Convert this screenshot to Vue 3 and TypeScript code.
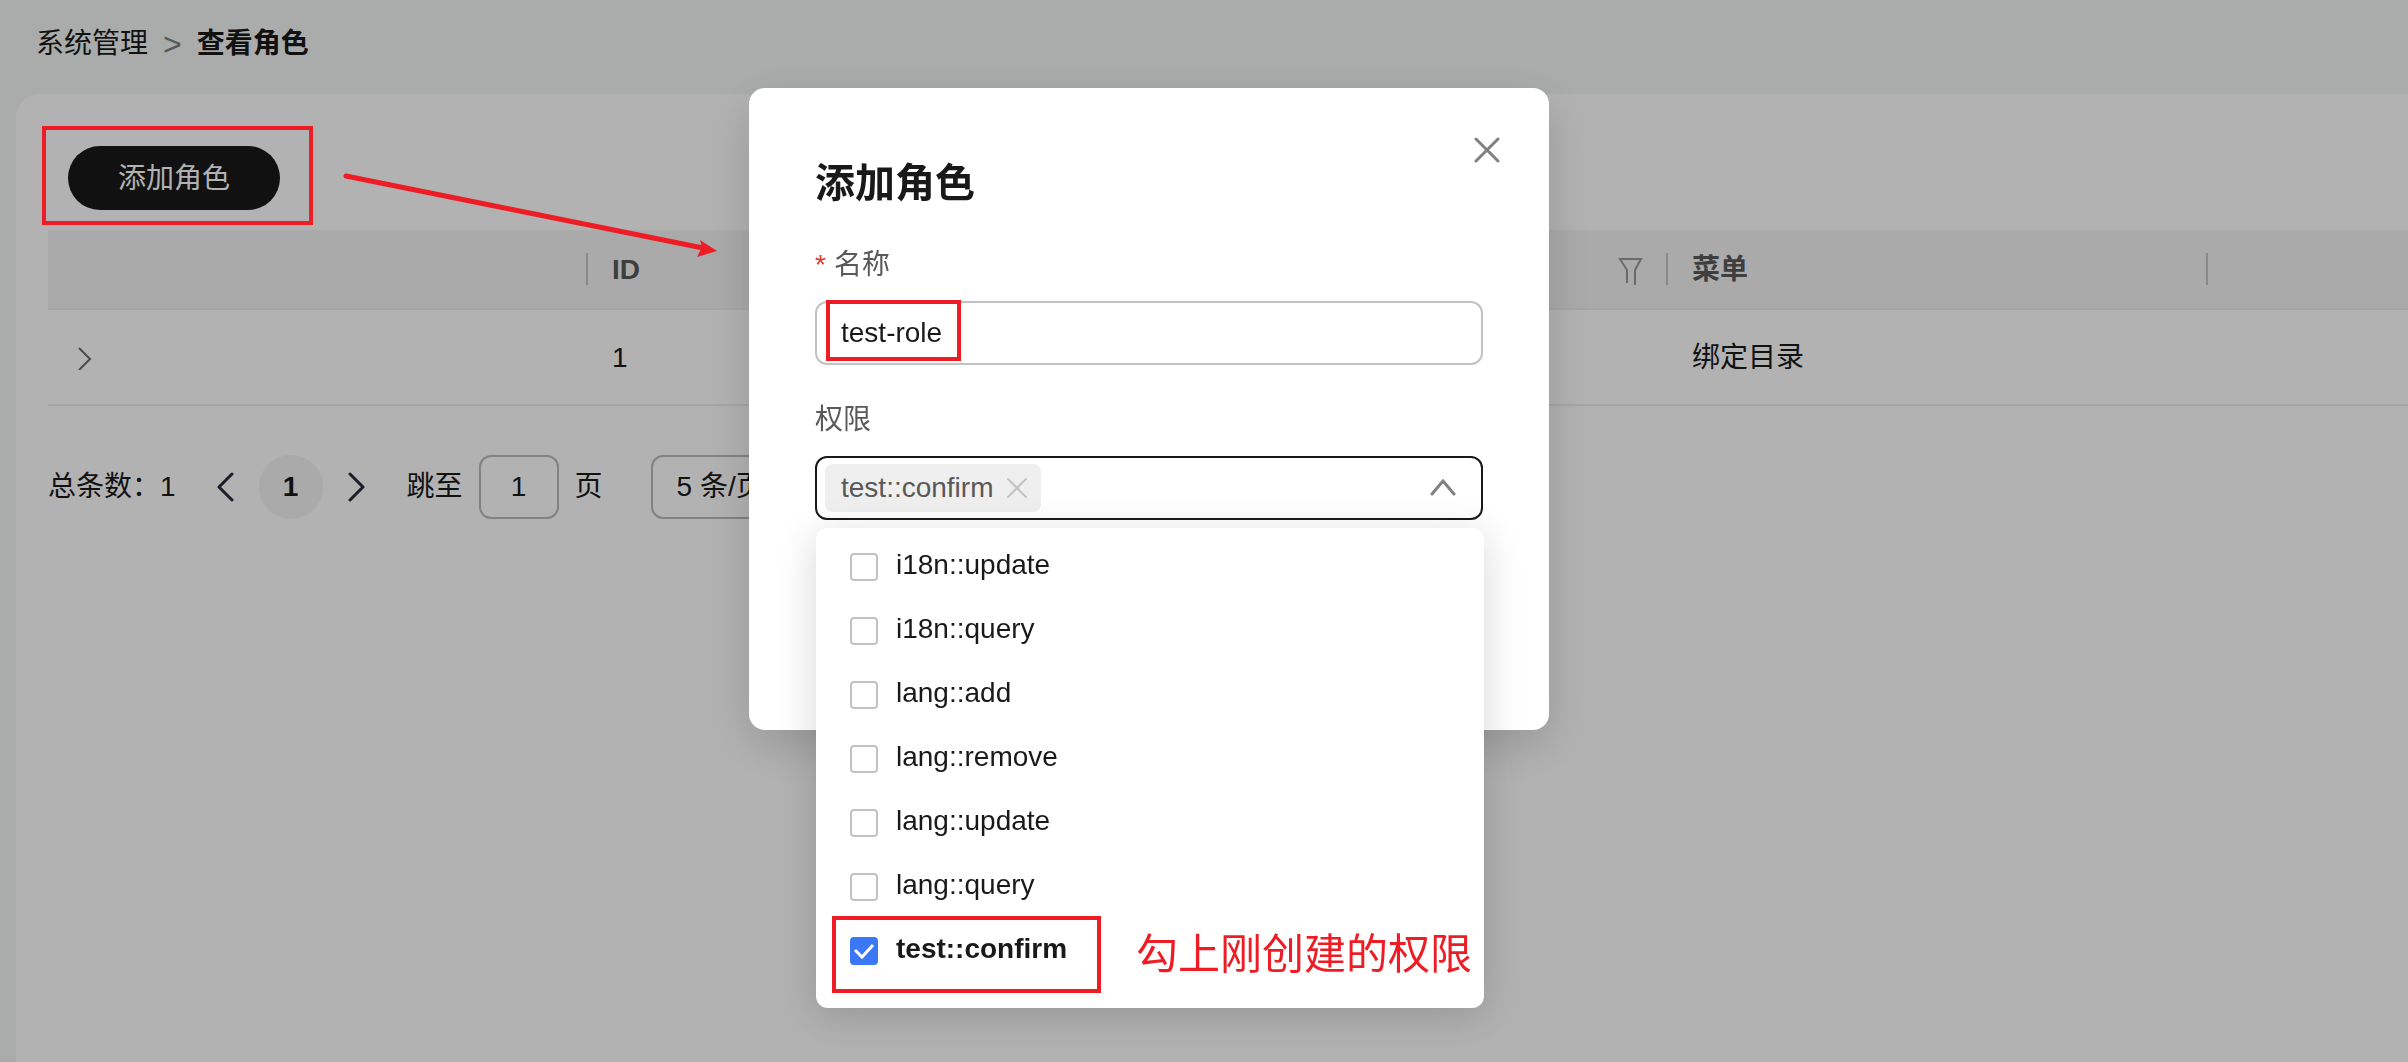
<script setup lang="ts">
import { computed, ref } from 'vue'

interface Permission {
  name: string
  checked: boolean
}

const roleName = ref('test-role')
const page = ref('1')
const pageSize = ref('5')

const permissions = ref<Permission[]>([
  { name: 'i18n::update', checked: false },
  { name: 'i18n::query', checked: false },
  { name: 'lang::add', checked: false },
  { name: 'lang::remove', checked: false },
  { name: 'lang::update', checked: false },
  { name: 'lang::query', checked: false },
  { name: 'test::confirm', checked: true },
])

const selected = computed(() => permissions.value.filter((p) => p.checked))
</script>

<template>
  <div class="page">
    <nav class="breadcrumb" aria-label="breadcrumb">
      <a href="#">系统管理</a>
      <span class="sep">&gt;</span>
      <strong>查看角色</strong>
    </nav>

    <main class="panel">
      <div class="toolbar">
        <div class="marked">
          <button class="primary" type="button">添加角色</button>
          <span class="mark mark-button"></span>
          <svg class="arrow" width="376" height="90" viewBox="0 0 376 90" aria-hidden="true">
            <path d="M4 6 L361 78" stroke="#ee1c24" stroke-width="5" stroke-linecap="round" />
            <path d="M375 81 L358 70 L360 77 L355 87 Z" fill="#ee1c24" />
          </svg>
        </div>
      </div>

      <div class="table-wrap">
        <table>
          <colgroup>
            <col class="col" /><col class="col" /><col class="col" /><col class="col" /><col />
          </colgroup>
          <thead>
            <tr>
              <th></th>
              <th>ID</th>
              <th>
                <div class="th-inner">
                  <span>名称</span>
                  <svg class="filter" width="26" height="30" viewBox="0 0 26 30" fill="none" stroke="#999" stroke-width="2">
                    <path d="M9 28 V15 L2 4 H23 L17 15 V30" />
                  </svg>
                </div>
              </th>
              <th>菜单</th>
              <th></th>
            </tr>
          </thead>
          <tbody>
            <tr>
              <td>
                <button class="plain expand" type="button" aria-label="展开">
                  <svg width="16" height="24" viewBox="0 0 16 24" fill="none" stroke="#6b6b6b" stroke-width="2">
                    <path d="M2 2 L13 13 L2 24" />
                  </svg>
                </button>
              </td>
              <td>1</td>
              <td>admin</td>
              <td>绑定目录</td>
              <td></td>
            </tr>
          </tbody>
        </table>
      </div>

      <div class="pager">
        <span class="total">总条数：1</span>
        <button class="plain prev" type="button" aria-label="上一页">
          <svg width="18" height="30" viewBox="0 0 18 30" fill="none" stroke="#252b3a" stroke-width="3" stroke-linecap="round" stroke-linejoin="round">
            <path d="M16 2 L3 15 L16 28" />
          </svg>
        </button>
        <button class="current" type="button">1</button>
        <button class="plain next" type="button" aria-label="下一页">
          <svg width="18" height="30" viewBox="0 0 18 30" fill="none" stroke="#252b3a" stroke-width="3" stroke-linecap="round" stroke-linejoin="round">
            <path d="M2 2 L15 15 L2 28" />
          </svg>
        </button>
        <label for="jump">跳至</label>
        <input id="jump" v-model="page" class="jump" type="text" />
        <span>页</span>
        <select v-model="pageSize" class="size" aria-label="每页条数">
          <option value="5">5 条/页</option>
          <option value="10">10 条/页</option>
        </select>
      </div>
    </main>

    <div class="overlay">
      <section class="modal" role="dialog" aria-labelledby="dialog-title">
        <button class="plain close" type="button" aria-label="关闭">
          <svg width="26" height="26" viewBox="0 0 26 26" stroke="#808080" stroke-width="3" stroke-linecap="round">
            <path d="M2 2 L24 24 M24 2 L2 24" />
          </svg>
        </button>
        <h2 id="dialog-title">添加角色</h2>

        <label class="field-label" for="role-name"><span class="star">*</span>名称</label>
        <div class="marked-field">
          <input id="role-name" v-model="roleName" class="text-input" type="text" />
          <span class="mark mark-name"></span>
        </div>

        <label class="field-label" for="role-perm">权限</label>
        <div class="select">
          <div class="select-box">
            <span v-for="p in selected" :key="p.name" class="tag">
              {{ p.name }}
              <button class="plain" type="button" aria-label="移除" @click="p.checked = false">
                <svg width="22" height="22" viewBox="0 0 22 22" stroke="#c2c2c2" stroke-width="2" stroke-linecap="round">
                  <path d="M2 2 L20 20 M20 2 L2 20" />
                </svg>
              </button>
            </span>
            <input id="role-perm" class="search" type="text" role="combobox" aria-expanded="true" aria-controls="perm-list" />
            <svg width="26" height="18" viewBox="0 0 26 18" fill="none" stroke="#808080" stroke-width="3" stroke-linecap="round">
              <path d="M2 15 L13 2 L24 15" />
            </svg>
          </div>

          <ul id="perm-list" class="dropdown">
            <li v-for="p in permissions" :key="p.name">
              <label class="option" :class="{ on: p.checked }">
                <input v-model="p.checked" type="checkbox" />
                <svg v-if="p.checked" class="tick" width="28" height="28" viewBox="0 0 28 28" fill="none" stroke="#fff" stroke-width="3">
                  <path d="M5 13 L12 20 L23 8" />
                </svg>
                <span>{{ p.name }}</span>
              </label>
              <span v-if="p.checked" class="mark mark-option"></span>
              <span v-if="p.checked" class="note">勾上刚创建的权限</span>
            </li>
          </ul>
        </div>
      </section>
    </div>
  </div>
</template>

<style>
body {
  margin: 0;
  background: #f4f7f6;
}
</style>

<style scoped>
.page {
  display: flex;
  flex-direction: column;
  min-height: 100vh;
  box-sizing: border-box;
  padding-left: 16px;
  overflow: hidden;
  font-family: "Liberation Sans", "Noto Sans CJK SC", sans-serif;
  font-size: 28px;
  line-height: 40px;
  color: #191919;
}

button,
input,
select {
  box-sizing: border-box;
  margin: 0;
  font: inherit;
  color: inherit;
  outline: none;
}

svg {
  display: block;
}

.plain {
  padding: 0;
  border: 0;
  background: none;
}

.breadcrumb {
  display: flex;
  gap: 15px;
  padding: 24px 20px 30px;
}

.breadcrumb a {
  color: inherit;
  text-decoration: none;
}

.sep {
  color: #808080;
  font-size: 32px;
}

.panel {
  flex: 1;
  padding-left: 32px;
  border-radius: 24px 0 0 0;
  background: #fff;
}

.toolbar {
  display: flex;
  padding: 52px 20px 20px;
}

.marked,
.marked-field {
  position: relative;
}

.primary {
  display: block;
  height: 64px;
  padding: 2px 50px 0;
  border: 0;
  border-radius: 32px;
  background: #191919;
  color: #fff;
}

.mark {
  position: absolute;
  z-index: 30;
  box-sizing: border-box;
  border: 4px solid #ee1c24;
  pointer-events: none;
}

.mark-button {
  top: -20px;
  right: -33px;
  bottom: -15px;
  left: -26px;
}

.arrow {
  position: absolute;
  z-index: 30;
  top: 24px;
  left: 274px;
}

.table-wrap {
  overflow: hidden;
}

table {
  width: 100%;
  table-layout: fixed;
  border-collapse: separate;
  border-spacing: 0;
}

.col {
  width: 540px;
}

th,
td {
  box-sizing: border-box;
  padding: 2px 24px 0;
  border-bottom: 2px solid #ededed;
  text-align: left;
}

th {
  height: 80px;
  background: linear-gradient(#c4c4c4, #c4c4c4) right center / 2px 32px no-repeat #f4f4f4;
  color: #595959;
}

th:last-child {
  background: #f4f4f4;
}

td {
  height: 96px;
}

.th-inner {
  display: flex;
  justify-content: space-between;
  align-items: center;
}

.expand {
  display: block;
  margin-left: 5px;
}

.pager {
  display: flex;
  align-items: center;
  padding-top: 49px;
}

.total {
  margin-right: 40px;
}

.current {
  width: 64px;
  height: 64px;
  margin: 0 25px;
  padding: 0;
  border: 0;
  border-radius: 32px;
  background: #f4f4f4;
  font-weight: 700;
}

.next {
  margin-right: 41px;
}

.jump {
  width: 80px;
  height: 64px;
  margin: 0 16px;
  border: 2px solid #bbb;
  border-radius: 12px;
  background: none;
  text-align: center;
}

.size {
  width: 200px;
  height: 64px;
  margin-left: 48px;
  padding: 0 24px;
  border: 2px solid #bbb;
  border-radius: 12px;
  background: none;
  appearance: none;
}

.overlay {
  position: fixed;
  inset: 0;
  z-index: 10;
  display: flex;
  justify-content: center;
  align-items: flex-start;
  padding: 88px 110px 0 0;
  background: rgba(0, 0, 0, 0.3);
}

.modal {
  position: relative;
  box-sizing: border-box;
  width: 800px;
  padding: 65px 66px 210px;
  border-radius: 16px;
  background: #fff;
  box-shadow: 0 16px 48px rgba(0, 0, 0, 0.16);
}

.close {
  position: absolute;
  top: 49px;
  right: 49px;
}

h2 {
  margin: 0 0 32px;
  font-size: 40px;
  line-height: 60px;
}

.field-label {
  display: block;
  margin-bottom: 16px;
  color: #595959;
}

.star {
  margin-right: 8px;
  color: #e0392c;
}

.marked-field {
  margin-bottom: 35px;
}

.text-input {
  display: block;
  width: 100%;
  height: 64px;
  padding: 0 24px;
  border: 2px solid #c2c2c2;
  border-radius: 12px;
}

.mark-name {
  top: -1px;
  left: 11px;
  width: 135px;
  height: 61px;
}

.select {
  position: relative;
}

.select-box {
  display: flex;
  align-items: center;
  box-sizing: border-box;
  height: 64px;
  padding: 0 25px 0 8px;
  border: 2px solid #191919;
  border-radius: 12px;
}

.tag {
  display: flex;
  align-items: center;
  gap: 13px;
  height: 48px;
  padding: 0 13px 0 16px;
  border-radius: 8px;
  background: #efefef;
  color: #595959;
}

.search {
  flex: 1;
  min-width: 0;
  border: 0;
  background: none;
}

.dropdown {
  position: absolute;
  top: 72px;
  left: 1px;
  box-sizing: border-box;
  width: 100%;
  margin: 0;
  padding: 8px 0 24px;
  border-radius: 12px;
  background: #fff;
  box-shadow: 0 8px 40px rgba(0, 0, 0, 0.16);
  list-style: none;
}

.dropdown li {
  position: relative;
}

.option {
  position: relative;
  display: flex;
  align-items: flex-start;
  gap: 18px;
  height: 64px;
  padding-left: 34px;
  line-height: 58px;
}

.option input {
  width: 28px;
  height: 28px;
  margin-top: 17px;
  border: 2px solid #c2c2c2;
  border-radius: 4px;
  background: #fff;
  appearance: none;
}

.option input:checked {
  border-color: #3b78f7;
  background: #3b78f7;
}

.tick {
  position: absolute;
  top: 17px;
  left: 34px;
  pointer-events: none;
}

.on {
  font-weight: 700;
}

.mark-option {
  top: -4px;
  bottom: -9px;
  left: 16px;
  width: 269px;
}

.note {
  position: absolute;
  top: 5px;
  left: 320px;
  color: #ee1c24;
  font-size: 42px;
  line-height: 60px;
  white-space: nowrap;
}
</style>
